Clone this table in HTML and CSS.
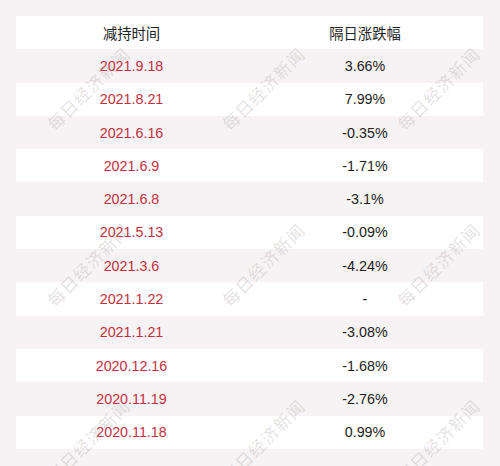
FILE: index.html
```html
<!DOCTYPE html>
<html lang="zh">
<head>
<meta charset="utf-8">
<link rel="stylesheet" href="styles.css">
</head>
<body>
<div class="page">
  <div class="table">
    <div class="row head"><div class="cell">减持时间</div><div class="cell">隔日涨跌幅</div></div>
    <div class="row"><div class="cell date">2021.9.18</div><div class="cell">3.66%</div></div>
    <div class="row"><div class="cell date">2021.8.21</div><div class="cell">7.99%</div></div>
    <div class="row"><div class="cell date">2021.6.16</div><div class="cell">-0.35%</div></div>
    <div class="row"><div class="cell date">2021.6.9</div><div class="cell">-1.71%</div></div>
    <div class="row"><div class="cell date">2021.6.8</div><div class="cell">-3.1%</div></div>
    <div class="row"><div class="cell date">2021.5.13</div><div class="cell">-0.09%</div></div>
    <div class="row"><div class="cell date">2021.3.6</div><div class="cell">-4.24%</div></div>
    <div class="row"><div class="cell date">2021.1.22</div><div class="cell">-</div></div>
    <div class="row"><div class="cell date">2021.1.21</div><div class="cell">-3.08%</div></div>
    <div class="row"><div class="cell date">2020.12.16</div><div class="cell">-1.68%</div></div>
    <div class="row"><div class="cell date">2020.11.19</div><div class="cell">-2.76%</div></div>
    <div class="row"><div class="cell date">2020.11.18</div><div class="cell">0.99%</div></div>
  </div>
  <div class="marks">
    <div class="mark"><span>每日经济新闻</span></div>
    <div class="mark"><span>每日经济新闻</span></div>
    <div class="mark"><span>每日经济新闻</span></div>
    <div class="mark"><span>每日经济新闻</span></div>
    <div class="mark"><span>每日经济新闻</span></div>
    <div class="mark"><span>每日经济新闻</span></div>
    <div class="mark"><span>每日经济新闻</span></div>
    <div class="mark"><span>每日经济新闻</span></div>
    <div class="mark"><span>每日经济新闻</span></div>
  </div>
</div>
</body>
</html>
```
FILE: styles.css
```css
html, body {
  margin: 0;
  padding: 0;
  background: #f7f3f4;
}
.page {
  position: relative;
  width: 500px;
  height: 466px;
  overflow: hidden;
  padding: 16px 17px 0 16px;
  box-sizing: border-box;
  font-family: "Liberation Sans", Arial, "Noto Sans CJK SC", sans-serif;
}
.table {
  display: grid;
  grid-template-rows: repeat(13, 33.3px);
}
.row {
  display: grid;
  grid-template-columns: 231px 1fr;
  align-items: center;
  background: #f7f3f4;
}
.row:nth-child(odd) {
  background: #ffffff;
}
.cell {
  text-align: center;
  font-size: 14.3px;
  color: #1d1d1d;
}
.head .cell {
  font-family: "Noto Sans CJK SC", sans-serif;
  font-size: 14.3px;
  color: #222;
}
.cell.date {
  color: #c4303e;
}
.marks {
  position: absolute;
  inset: 0;
  display: grid;
  grid-template-columns: repeat(3, 175px);
  grid-template-rows: repeat(3, 176px);
  pointer-events: none;
}
.mark {
  display: flex;
  align-items: center;
  justify-content: center;
}
.mark span {
  display: block;
  transform: rotate(-45deg);
  font-family: "Noto Sans CJK SC", serif;
  font-size: 17px;
  letter-spacing: 1px;
  white-space: nowrap;
  color: rgba(160, 150, 152, 0.28);
}
```
